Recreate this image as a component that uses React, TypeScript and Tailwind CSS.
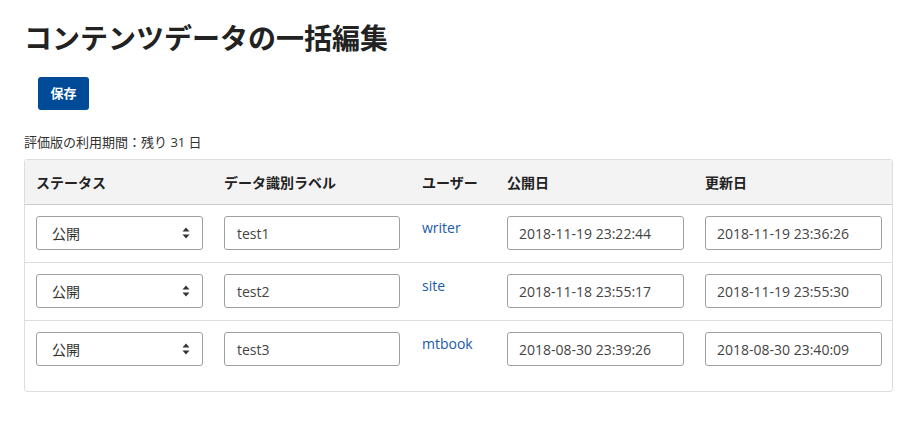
import React from "react";

const rows = [
  { label: "test1", user: "writer", pub: "2018-11-19 23:22:44", upd: "2018-11-19 23:36:26" },
  { label: "test2", user: "site", pub: "2018-11-18 23:55:17", upd: "2018-11-19 23:55:30" },
  { label: "test3", user: "mtbook", pub: "2018-08-30 23:39:26", upd: "2018-08-30 23:40:09" },
];

const font = { fontFamily: '"Open Sans", "Noto Sans CJK JP", sans-serif' };

function Arrows() {
  return (
    <svg width="8" height="12" viewBox="0 0 8 12" className="fill-[#333]">
      <path d="M4 0.5 L7.5 4.5 H0.5 Z" />
      <path d="M4 11.5 L7.5 7.5 H0.5 Z" />
    </svg>
  );
}

const inputCls =
  "h-[34px] w-full rounded-[3px] border border-[#a0a0a0] px-[12px] flex items-center text-[14px] text-[#444] bg-white";

export default function App() {
  return (
    <div className="bg-white min-h-[421px] px-[24px] pt-[18px] text-[#333]" style={font}>
      <h1 className="text-[28px] font-bold leading-[40px] text-[#222] tracking-[0px]">
        コンテンツデータの一括編集
      </h1>
      <div className="mt-[19px] pl-[14px]">
        <button className="h-[33px] w-[51px] rounded-[3px] bg-[#004b98] text-white text-[13px] font-bold">
          保存
        </button>
      </div>
      <p className="mt-[22px] text-[13px] leading-[20px] text-[#333]">評価版の利用期間：残り 31 日</p>
      <div className="mt-[7px] border border-[#ddd] rounded-[3px] pb-[13px]">
        <div className="grid grid-cols-[188px_198px_85px_198px_1fr] bg-[#f3f3f3] border-b border-[#ccc] h-[45px] items-center text-[14px] font-bold text-[#222]">
          <div className="pl-[11px]">ステータス</div>
          <div className="pl-[11px]">データ識別ラベル</div>
          <div className="pl-[11px]">ユーザー</div>
          <div className="pl-[11px]">公開日</div>
          <div className="pl-[11px]">更新日</div>
        </div>
        {rows.map((r, i) => (
          <div
            key={r.label}
            className={`grid grid-cols-[188px_198px_85px_198px_1fr] pt-[11px] pb-[12px] ${i < rows.length - 1 ? "border-b border-[#ddd]" : ""}`}
          >
            <div className="pl-[11px] pr-[10px]">
              <div className={`${inputCls} justify-between pl-[15px] pr-[12px]`}>
                <span className="text-[#333]">公開</span>
                <Arrows />
              </div>
            </div>
            <div className="pl-[11px] pr-[11px]">
              <div className={inputCls}>{r.label}</div>
            </div>
            <div className="pl-[11px] pt-[2px] text-[14px] leading-[20px] text-[#1a5aa9]">{r.user}</div>
            <div className="pl-[11px] pr-[10px]">
              <div className={`${inputCls} pl-[11px]`}>{r.pub}</div>
            </div>
            <div className="pl-[11px] pr-[10px]">
              <div className={`${inputCls} pl-[11px]`}>{r.upd}</div>
            </div>
          </div>
        ))}
      </div>
    </div>
  );
}
